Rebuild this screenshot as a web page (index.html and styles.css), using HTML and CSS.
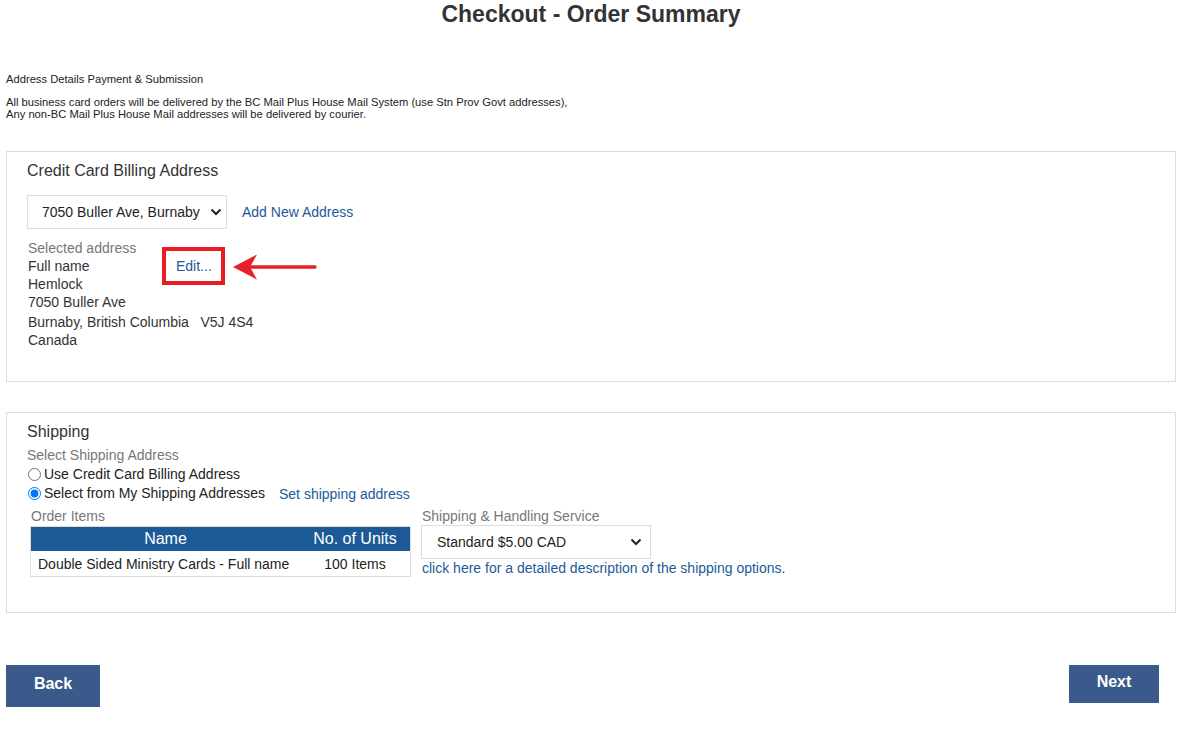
FILE: index.html
```html
<!DOCTYPE html>
<html lang="en">
<head>
    <meta charset="UTF-8">
    <meta name="viewport" content="width=device-width, initial-scale=1.0">
    <title>Checkout - Order Summary</title>
    <link rel="stylesheet" href="styles.css">
</head>
<body>
    <div class="page">
        <h1 class="title">Checkout - Order Summary</h1>

        <div class="steps">Address Details Payment &amp; Submission</div>
        <p class="notice">
            All business card orders will be delivered by the BC Mail Plus House Mail System (use Stn Prov Govt addresses),<br>
            Any non-BC Mail Plus House Mail addresses will be delivered by courier.
        </p>

        <!-- billing address -->
        <div class="panel billing">
            <div class="panel-title">Credit Card Billing Address</div>
            <div class="addr-pick">
                <div class="select-box addr-select">
                    <select>
                        <option>7050 Buller Ave, Burnaby</option>
                    </select>
                    <svg class="chev" width="12" height="8" viewBox="0 0 12 8"><path d="M1.5 1.5 L6 6 L10.5 1.5" fill="none" stroke="#222" stroke-width="2"/></svg>
                </div>
                <a href="#" class="link">Add New Address</a>
            </div>
            <div class="selected">
                <div class="label">Selected address</div>
                <div class="addr-lines">
                    <div class="addr-text">
                        <div>Full name</div>
                        <div>Hemlock</div>
                        <div>7050 Buller Ave</div>
                        <div class="city">Burnaby, British Columbia &nbsp; V5J 4S4</div>
                        <div>Canada</div>
                    </div>
                    <div class="edit-cell">
                        <a href="#" class="link">Edit...</a>
                        <!-- annotation -->
                        <span class="mark"></span>
                        <svg class="arrow" width="86" height="28" viewBox="0 0 86 28">
                            <path d="M18 14 L82 14" stroke="#e8202a" stroke-width="3.5" stroke-linecap="round"/>
                            <path d="M0 14 L24 1.5 L17 14 L24 26.5 Z" fill="#e8202a"/>
                        </svg>
                    </div>
                </div>
            </div>
        </div>

        <!-- shipping -->
        <div class="panel shipping">
            <div class="panel-title">Shipping</div>
            <div class="label">Select Shipping Address</div>
            <label class="radio first"><input type="radio" name="ship"> Use Credit Card Billing Address</label>
            <div class="radio-row">
                <label class="radio"><input type="radio" name="ship" checked> Select from My Shipping Addresses</label>
                <a href="#" class="link">Set shipping address</a>
            </div>
            <div class="ship-cols">
                <div class="items">
                    <div class="label">Order Items</div>
                    <table class="items-table">
                        <tr>
                            <th class="col-name">Name</th>
                            <th class="col-units">No. of Units</th>
                        </tr>
                        <tr>
                            <td class="col-name">Double Sided Ministry Cards - Full name</td>
                            <td class="col-units">100 Items</td>
                        </tr>
                    </table>
                </div>
                <div class="service">
                    <div class="label">Shipping &amp; Handling Service</div>
                    <div class="select-box service-select">
                        <select>
                            <option>Standard $5.00 CAD</option>
                        </select>
                        <svg class="chev" width="12" height="8" viewBox="0 0 12 8"><path d="M1.5 1.5 L6 6 L10.5 1.5" fill="none" stroke="#222" stroke-width="2"/></svg>
                    </div>
                    <a href="#" class="link">click here for a detailed description of the shipping options.</a>
                </div>
            </div>
        </div>

        <div class="nav">
            <button class="btn back">Back</button>
            <button class="btn next">Next</button>
        </div>
    </div>
</body>
</html>
```

FILE: styles.css
```css
body{
    margin:0;
    font-family:"Liberation Sans", Arial, sans-serif;
    color:#333;
    background:#fff;
}
.page{
    padding:0 8px 0 6px;
}
.title{
    margin:2px 0 0;
    font-size:23px;
    line-height:25px;
    text-align:center;
    color:#333;
}
.steps{
    margin-top:46px;
    font-size:11.2px;
    line-height:13px;
    color:#222;
}
.notice{
    margin:10px 0 0;
    font-size:11.2px;
    line-height:12px;
    color:#222;
}
.link{
    color:#1c5a98;
    text-decoration:none;
    font-size:14px;
}
.label{
    color:#777;
    font-size:14px;
    line-height:18px;
}

.panel{
    border:1px solid #ddd;
    padding:10px 20px 0;
}
.panel-title{
    font-size:16px;
    line-height:18px;
    color:#333;
}
.billing{
    margin-top:31px;
    height:219px;
}
.addr-pick{
    display:flex;
    align-items:center;
    gap:15px;
    margin-top:15px;
}
.select-box{
    position:relative;
}
.select-box select{
    appearance:none;
    -webkit-appearance:none;
    background:#fff;
    border:1px solid #ddd;
    border-radius:0;
    font-family:"Liberation Sans", Arial, sans-serif;
    font-size:14px;
    color:#222;
    height:34px;
    padding:0 0 0 14px;
    outline:none;
}
.select-box .chev{
    position:absolute;
    top:13px;
    pointer-events:none;
}
.addr-select select{
    width:200px;
}
.addr-select .chev{
    left:183px;
}
.selected{
    margin-top:10px;
    font-size:14px;
    line-height:18px;
}
.selected .label{
    margin-left:1px;
}
.addr-lines{
    display:flex;
}
.addr-text{
    width:148px;
    padding-left:1px;
}
.city{
    margin-top:2px;
    white-space:nowrap;
}
.edit-cell{
    position:relative;
    height:18px;
}
.mark{
    position:absolute;
    left:-14px;
    top:-10px;
    width:55px;
    height:30px;
    border:4px solid #e81c24;
}
.arrow{
    position:absolute;
    left:57px;
    top:-4px;
}

.shipping{
    margin-top:30px;
    height:189px;
}
.shipping .panel-title{
    margin-bottom:5px;
}
.radio{
    display:flex;
    align-items:center;
    font-size:14px;
    line-height:19px;
    color:#222;
}
.radio.first{
    margin-top:1px;
}
.radio input{
    margin:0 3px 0 1px;
    width:13px;
    height:13px;
}
.radio-row{
    display:flex;
    align-items:center;
    gap:14px;
}
.ship-cols{
    display:flex;
    align-items:flex-start;
    gap:10px;
    margin-top:4px;
    padding-left:3px;
}
.items .label{
    margin-left:1px;
}
.items-table{
    border-collapse:collapse;
    width:381px;
    border:1px solid #ddd;
    margin-top:1px;
}
.items-table th{
    background:#1b5a96;
    color:#fff;
    font-weight:normal;
    font-size:16px;
    height:24px;
    padding:0;
}
.items-table td{
    font-size:14px;
    color:#222;
    height:25px;
    padding:0;
}
.items-table .col-name{
    width:262px;
}
.items-table td.col-name{
    padding-left:7px;
}
.items-table .col-units{
    text-align:center;
}
.service .label{
    margin-left:1px;
    line-height:18px;
}
.service-select select{
    width:230px;
    padding-left:15px;
}
.service-select .chev{
    left:209px;
}
.service .link{
    display:block;
    line-height:18px;
    margin-left:1px;
}

.nav{
    display:flex;
    justify-content:space-between;
    align-items:flex-start;
    margin-top:52px;
    padding-right:17px;
}
.btn{
    background:#3a5a8b;
    color:#fff;
    border:none;
    font-family:"Liberation Sans", Arial, sans-serif;
    font-weight:bold;
    font-size:16px;
    padding:0;
}
.back{
    width:94px;
    height:42px;
    padding-bottom:4px;
}
.next{
    width:90px;
    height:38px;
    padding-bottom:4px;
}
```
